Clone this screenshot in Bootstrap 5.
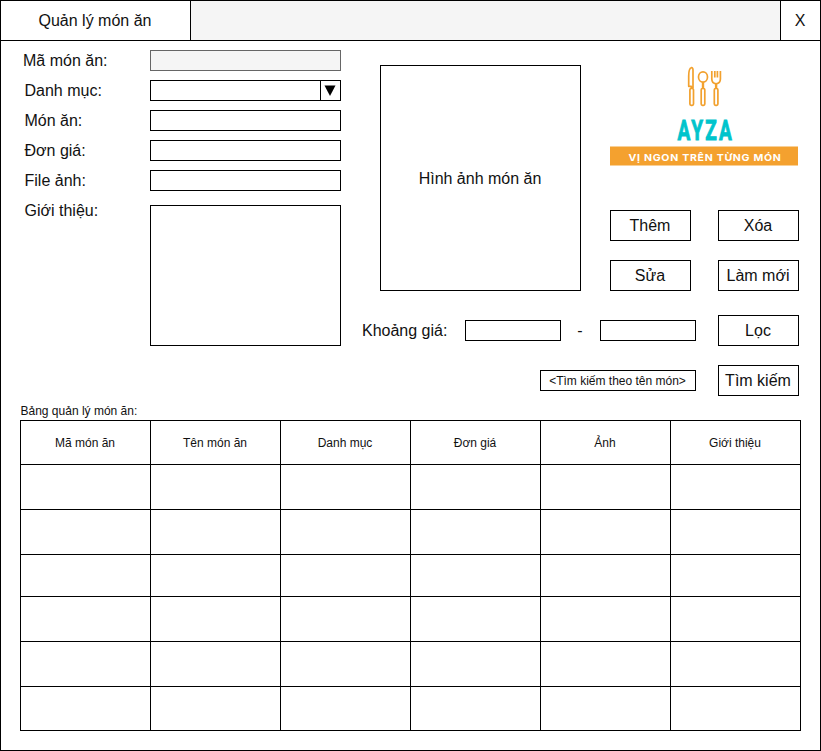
<!DOCTYPE html>
<html lang="vi">
<head>
<meta charset="utf-8">
<meta name="viewport" content="width=device-width, initial-scale=1">
<title>Quản lý món ăn</title>
<link href="https://cdn.jsdelivr.net/npm/bootstrap@5.3.0/dist/css/bootstrap.min.css" rel="stylesheet">
<style>
body { font-family: "Liberation Sans", Arial, sans-serif; font-size: 16px; line-height: 20px; color: #111; background: #fff; }
.window-frame { width: 821px; height: 751px; border: 1px solid #000; }
.title-bar { height: 40px; border-bottom: 1px solid #000; background: #f5f5f5; }
.title-tab { width: 190px; border-right: 1px solid #000; padding-right: 1px; }
.title-fill { margin-top: -1px; border-top: 1px solid #666; }
.title-close { width: 40px; border-left: 1px solid #000; padding-right: 1px; }
.dish-form { width: 340px; padding: 9px 0 0 23.500px; }
.form-line { height: 21px; margin-bottom: 9px; }
.form-line.first-line { margin-left: -1.500px; }
.box { border: 1px solid #000; border-radius: 0; background: #fff; padding: 0; color: #111; display: block; }
.line-box { width: 191px; height: 21px; }
.line-box.locked { border-color: #666; background: #f5f5f5; }
.drop-mark { width: 20px; border-left: 1px solid #000; padding-right: 1px; }
.intro-line { padding-top: 1px; }
.intro-box { width: 191px; height: 141px; resize: none; margin-top: 4px; }
.work-area { width: 437px; margin-left: 21px; padding-top: 24px; }
.upper-area { padding-left: 18px; }
.photo-box { width: 201px; height: 226px; padding: 1px 1px 0 0; }
.side { width: 189px; }
.action-grid { display: grid; grid-template-columns: 81px 81px; column-gap: 27px; row-gap: 19px; }
.act { width: 81px; height: 31px; font-size: 16px; line-height: 29px; padding-right: 1px; white-space: nowrap; text-align: center; }
.price-box { width: 96px; height: 21px; }
.range-dash { width: 39px; padding-right: 1px; }
.search-box { width: 156px; height: 21px; font-size: 12px; line-height: 19px; padding-right: 1px; text-align: center; }
.search-box::placeholder { color: #111; opacity: 1; }
.filter-line { margin-top: 24px; height: 31px; }
.search-line { margin-top: 19px; height: 31px; }
.entry-gap { gap: 22px; }
.list-area { padding: 6px 19px 0 19px; font-size: 12px; }
.list-title { height: 18px; line-height: 18px; padding-left: .5px; }
.dish-table { width: 781px; table-layout: fixed; border-collapse: collapse; text-align: center; }
.dish-table th, .dish-table td { border: 1px solid #000; padding: 0 1px 0 0; font-weight: 400; height: 45px; vertical-align: middle; }
.dish-table .row-44 > * { height: 44px; }
.dish-table .row-42 > * { height: 42px; }
</style>
<script src="https://cdn.jsdelivr.net/npm/bootstrap@5.3.0/dist/js/bootstrap.bundle.min.js"></script>
</head>
<body>
<main class="window-frame overflow-hidden">
  <header class="title-bar d-flex">
    <div class="title-tab bg-white d-flex align-items-center justify-content-center">Quản lý món ăn</div>
    <div class="title-fill flex-grow-1"></div>
    <div class="title-close bg-white d-flex align-items-center justify-content-center" role="button" aria-label="Đóng">X</div>
  </header>

  <div class="d-flex">
    <form class="dish-form">
      <div class="form-line first-line d-flex align-items-center justify-content-between"><label for="code">Mã món ăn:</label><input id="code" class="box line-box locked" disabled></div>
      <div class="form-line d-flex align-items-center justify-content-between"><span>Danh mục:</span>
        <div class="box line-box d-flex justify-content-end" role="button">
          <span class="drop-mark d-flex align-items-center justify-content-center"><svg width="12" height="11" viewBox="0 0 12 11"><path d="M.5 .5h11L6 11z"/></svg></span>
        </div>
      </div>
      <div class="form-line d-flex align-items-center justify-content-between"><label for="dish">Món ăn:</label><input id="dish" class="box line-box"></div>
      <div class="form-line d-flex align-items-center justify-content-between"><label for="price">Đơn giá:</label><input id="price" class="box line-box"></div>
      <div class="form-line d-flex align-items-center justify-content-between"><label for="file">File ảnh:</label><input id="file" class="box line-box"></div>
      <div class="intro-line d-flex align-items-start justify-content-between"><label for="intro">Giới thiệu:</label><textarea id="intro" class="box intro-box"></textarea></div>
    </form>

    <section class="work-area">
      <div class="upper-area d-flex justify-content-between">
        <div class="box photo-box d-flex align-items-center justify-content-center">Hình ảnh món ăn</div>
        <div class="side d-flex flex-column justify-content-between">
          <svg class="d-block" width="189" height="102" viewBox="610 65 189 102">
            <g fill="none" stroke="#f2a12e" stroke-width="1.700" stroke-linejoin="round">
              <path d="M693 88V70C693 68.300 692.400 67.500 691.300 67.700C689.300 68.200 688.700 72 688.700 76V86.300H691.300V88.500"/>
              <rect x="689.900" y="88.500" width="3.600" height="16.800" rx="1.300"/>
              <ellipse cx="703" cy="77" rx="4.500" ry="5.200"/>
              <path d="M703 82V88" stroke-width="2.400"/>
              <rect x="701.200" y="88.500" width="3.600" height="16.800" rx="1.300"/>
              <path d="M711.800 71V79C711.800 82 713.500 83.500 716.100 83.800C718.800 83.500 720.400 82 720.400 79V71M714.800 71V77.500M717.400 71V77.500"/>
              <path d="M716.100 83.500V88" stroke-width="2.400"/>
              <rect x="714.300" y="88.500" width="3.600" height="16.800" rx="1.300"/>
            </g>
            <text transform="translate(677.500 140) scale(.68 1)" textLength="80" lengthAdjust="spacing" font-family="Roboto, sans-serif" font-weight="700" font-size="28" fill="#00c4cc" stroke="#00c4cc" stroke-width=".9">AYZA</text>
            <rect x="610" y="146.500" width="188" height="19" fill="#f4a12f"/>
            <text transform="translate(628.500 160.700) scale(1.100 1)" textLength="138.500" lengthAdjust="spacing" font-family="Inter, sans-serif" font-weight="700" font-size="9.600" fill="#fff">VỊ NGON TRÊN TỪNG MÓN</text>
          </svg>
          <div class="action-grid">
            <button class="box act">Thêm</button><button class="box act">Xóa</button>
            <button class="box act">Sửa</button><button class="box act">Làm mới</button>
          </div>
        </div>
      </div>
      <div class="filter-line d-flex align-items-center justify-content-between">
        <label for="low">Khoảng giá:</label>
        <div class="d-flex align-items-center entry-gap">
          <div class="d-flex align-items-center"><input id="low" class="box price-box"><span class="range-dash text-center">-</span><input class="box price-box" aria-label="Giá đến"></div>
          <button class="box act">Lọc</button>
        </div>
      </div>
      <div class="search-line d-flex align-items-center justify-content-end entry-gap">
        <input class="box search-box" placeholder="&lt;Tìm kiếm theo tên món&gt;" aria-label="Tìm kiếm">
        <button class="box act">Tìm kiếm</button>
      </div>
    </section>
  </div>

  <section class="list-area">
    <div class="list-title">Bảng quản lý món ăn:</div>
    <table class="dish-table">
      <thead><tr class="row-44"><th>Mã món ăn</th><th>Tên món ăn</th><th>Danh mục</th><th>Đơn giá</th><th>Ảnh</th><th>Giới thiệu</th></tr></thead>
      <tbody>
        <tr><td></td><td></td><td></td><td></td><td></td><td></td></tr>
        <tr><td></td><td></td><td></td><td></td><td></td><td></td></tr>
        <tr class="row-42"><td></td><td></td><td></td><td></td><td></td><td></td></tr>
        <tr><td></td><td></td><td></td><td></td><td></td><td></td></tr>
        <tr><td></td><td></td><td></td><td></td><td></td><td></td></tr>
        <tr class="row-44"><td></td><td></td><td></td><td></td><td></td><td></td></tr>
      </tbody>
    </table>
  </section>
</main>
</body>
</html>
